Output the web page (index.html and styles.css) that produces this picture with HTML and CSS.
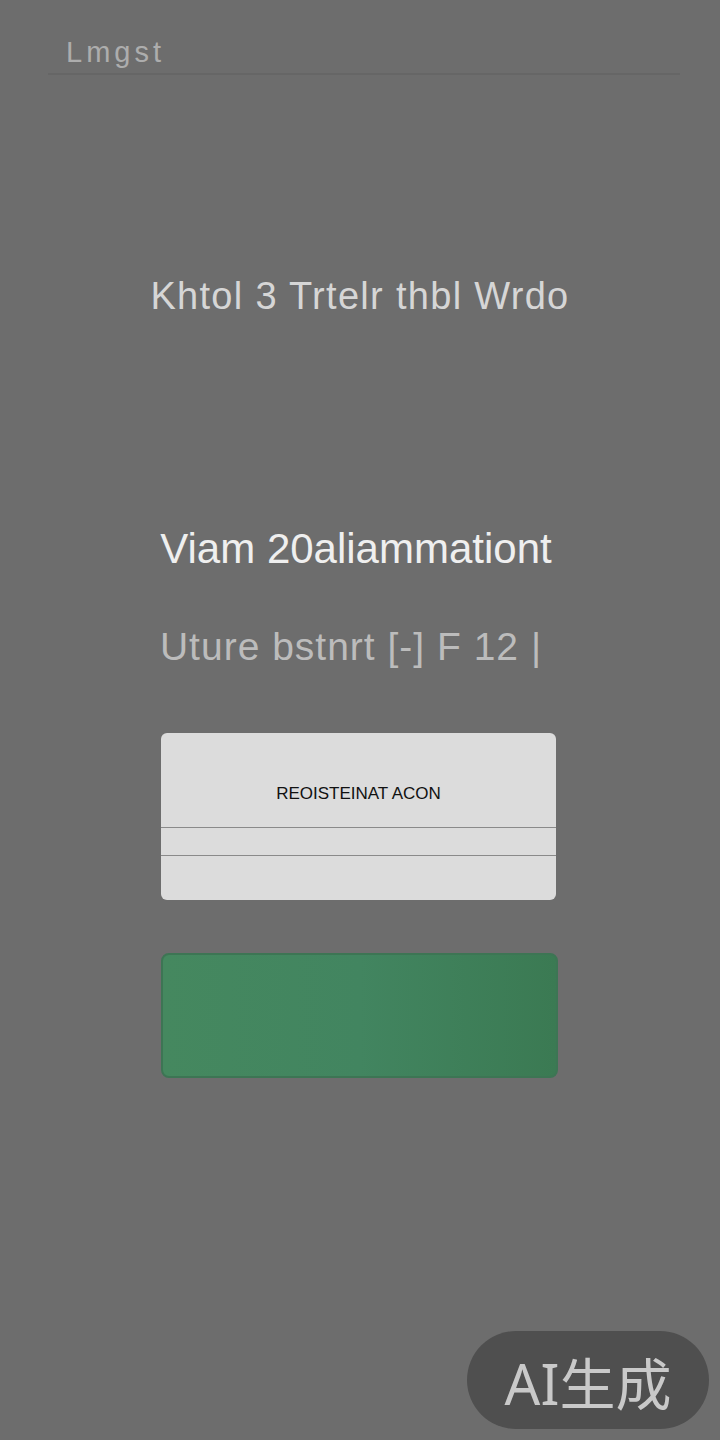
FILE: index.html
```html
<!DOCTYPE html>
<html lang="en">
<head>
  <meta charset="UTF-8">
  <title>Registration</title>
  <meta name="viewport" content="width=device-width, initial-scale=1.0">
  <link rel="stylesheet" href="styles.css">
</head>
<body>

  <div class="screen">
    <header class="topbar">
      <span class="brand">Lmgst</span>
    </header>

    <h2 class="subtitle">Khtol 3 Trtelr thbl Wrdo</h2>

    <div class="info">
      <h1 class="title">Viam 20aliammationt</h1>
      <p class="meta">Uture bstnrt [-] F 12 |</p>
    </div>

    <div class="card">
      <div class="card-head">REOISTEINAT ACON</div>
      <div class="card-row"></div>
      <div class="card-row last"></div>
    </div>

    <button class="go"></button>
  </div>

  <div class="badge">AI生成</div>

</body>
</html>
```

FILE: styles.css
```css
:root {
  --bg-color: #6d6d6d;
  --card-bg: #dcdcdc;
  --green: #43845f;
}

* {
  box-sizing: border-box;
}

body {
  margin: 0;
  font-family: 'Liberation Sans', Arial, sans-serif;
  background-color: var(--bg-color);
  height: 1440px;
  overflow: hidden;
}

.screen {
  display: flex;
  flex-direction: column;
  align-items: center;
}

.topbar {
  align-self: stretch;
  margin: 37px 40px 0 48px;
  padding: 0 0 6px 18px;
  border-bottom: 2px solid #666;
}

.brand {
  font-size: 29px;
  line-height: 30px;
  color: #adadad;
  letter-spacing: 4px;
}

.subtitle {
  margin: 199px 0 0;
  font-size: 38px;
  line-height: 44px;
  font-weight: normal;
  color: #d6d6d6;
  letter-spacing: 1.3px;
}

.info {
  margin-top: 207px;
  display: flex;
  flex-direction: column;
  align-items: center;
  gap: 52px;
}

.title {
  margin: 0 8px 0 0;
  font-size: 42px;
  line-height: 48px;
  font-weight: normal;
  color: #efefef;
}

.meta {
  margin: 0 18px 0 0;
  font-size: 39px;
  line-height: 44px;
  color: #bcbcbc;
  letter-spacing: 1px;
}

.card {
  margin: 64px 3px 0 0;
  width: 395px;
  background: var(--card-bg);
  border-radius: 6px;
  overflow: hidden;
}

.card-head {
  height: 95px;
  padding-top: 28px;
  display: flex;
  align-items: center;
  justify-content: center;
  font-size: 17px;
  color: #111;
  border-bottom: 1px solid #8a8a8a;
}

.card-row {
  height: 28px;
  border-bottom: 1px solid #8a8a8a;
}

.card-row.last {
  height: 44px;
  border-bottom: none;
}

.go {
  margin: 53px 1px 0 0;
  width: 397px;
  height: 125px;
  border: 2px solid #3d7554;
  border-radius: 8px;
  background: linear-gradient(90deg, #45885f 0%, #428560 50%, #3b7a53 100%);
  cursor: pointer;
}

.badge {
  position: absolute;
  left: 467px;
  top: 1331px;
  width: 242px;
  height: 98px;
  border-radius: 49px;
  background: #4f4f4f;
  color: #c9c9c9;
  font-family: 'Noto Sans', 'Noto Sans CJK SC', sans-serif;
  font-size: 56px;
  display: flex;
  align-items: center;
  justify-content: center;
}
```
